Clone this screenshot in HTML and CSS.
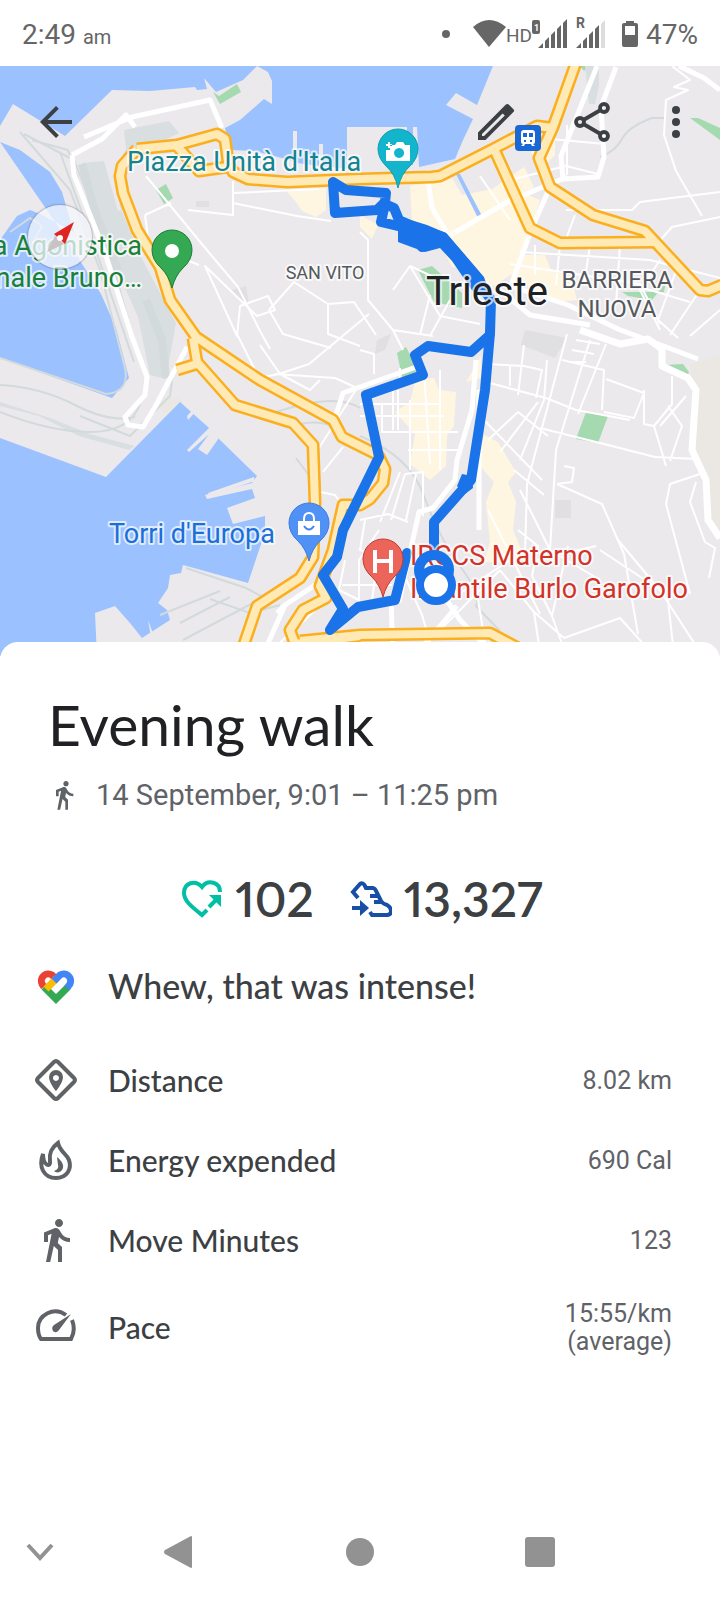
FILE: index.html
```
<!DOCTYPE html>
<html lang="en">
  <head>
    <meta charset="utf-8">
    <meta name="viewport" content="width=device-width, initial-scale=1">
    <title>Evening walk</title>
    <link rel="stylesheet" href="styles.css">
  </head>
  <body>
    <div class="status-bar">
      <div class="clock">2:49 <small>am</small></div>
      <div class="status-icons">
        <svg width="197" height="36" viewBox="440 15 197 36" fill="#666" aria-hidden="true">
          <circle cx="445" cy="33" r="4"/>
          <path d="M472 26q16-14 33 0L488 46z"/>
          <text class="status-hd" x="505" y="41">HD</text>
          <rect x="531" y="19" width="8" height="14" rx="2"/>
          <text class="status-sim" x="533" y="30">1</text>
          <path d="M537 47l5-5v5zM544 47V40l4-4v11zM550 47V34l4-4v17zM556 47V28l4-4v23zM562 47V22l4-4v29z"/>
          <text class="status-r" x="575" y="27">R</text>
          <path d="M575 47l5-5v5zM582 47V40l4-4v11zM588 47V34l4-4v17zM594 47V28l4-4v23z"/>
          <path d="M600 47V23l4-4v28z" fill="#ddd"/>
          <path fill-rule="evenodd" d="M625 20h8v2h2q2 0 2 2v20q0 2-2 2h-12q-2 0-2-2V24q0-2 2-2h2zM624 25v9h10v-9z"/>
        </svg>
        <span class="battery">47%</span>
      </div>
    </div>

    <div class="map-area">
      <svg class="map" viewBox="0 66 720 590" role="img" aria-label="Map of the walk around Trieste">
        <rect class="land" x="0" y="66" width="720" height="590"/>

        <!-- districts and parks -->
        <g class="district">
          <path d="M286 190l40-2 0 22-10 7-14-6-6-9zM410 186l42-8 10 17 30-6 32-22 10 20-40 50-20 30-22 0-15-28-25-18z"/>
          <path d="M452 238l70-46 18 8-22 70-28 18zM505 255l40 0 6 15 20 7 6 23-20 2-45-25zM530 150l25-10 0 15-15 15z"/>
          <path d="M360 215l18 10-6 14-12-12zM424 378h10l5 12 17 2-2 34-7 10-1 30-16 14-20-16 5-30-20-22 15-10 5-20z"/>
          <path d="M466 382l15-26v22zM484 435l14 7 18 30-8 10 8 20-3 28 9 22-10 10h-28l6-20-4-40 8-20-16-18z"/>
        </g>
        <path class="sand" d="M690 365l30-10v180l-15-30-10-60zM150 398h30l20 30-8 10-12-8z"/>
        <g class="building">
          <path d="M525 330l42 8-12 20-34-13zM555 500h16v18h-16zM196 201h13v6h-13zM232 290l14-4 3 18-12-6zM377 340l14-6-6 16-10 4z"/>
        </g>
        <g class="park">
          <path d="M213 92l6 4 18-12 4 8-21 12zM156 190l10-6 7 14-9 6zM418 270l14-4 30 27 0 15-28-6zM622 292l42 0 2-10-14 18-24-4z"/>
          <path d="M690 118l8 0 22 10v12zM397 353l9-6 8 15 2 12-14 3zM586 412l22 4-10 27-22-4zM665 365l18-1 6 8-2 4-22-5zM580 66h8l-4 5z"/>
        </g>

        <!-- water -->
        <g class="water">
          <path d="M0 66V126L13 104 65 136 112 90 150 91 195 87 197 90 207 89 204 78 216 92 243 80 257 66z"/>
          <path d="M257 66l11 6 4 9v23l-8-5-24 21-15 8 6 22 24 1 38 10 0-30h4v32l22 3v-22h4v22l24 3v-42h60v38h6v-38h4l2 40 36-8 8-19 10-21-27-14 10-12 21 12 18-44-4-5z"/>
          <path d="M0 142l20 8 30 22 12 20 7 24 5 16-34-18-10-4-13 6-17 24v118l112 40 17-20-13-50-15-34-41-65z"/>
          <path d="M0 438l106 39 74-75 28 25 10 11 39 38-5 7-47 12 2 4 45-10 3 9-28 10 6 16 32-8 0 16-17 51-65-18-2 8-11 2-2 13-10 15 9 7 3 10-28 18-12-15-15-17-20 7 2 43H0z"/>
          <path d="M460 174l22 42-5 0-21-42z"/>
        </g>
        <path class="land" d="M187 416l14-15 2 3-15 16zM187 450l24-24 4 3-26 23zM198 449l15-20 8 6-14 20zM208 493l46-16 1 4-45 15zM148 620l6 16-3 1z"/>

        <!-- rail yards -->
        <path class="yard" d="M124 130l45-9 10 12-53 26-12 18 6 30 22 52 34 64-10 56-16-4-12-58-24-54-20-60-12-40 22-2 14 50 8-2-10-40 10-20z"/>
        <path class="yard" d="M585 66h14v20l-4 18h-6zM0 402l50 16 40 16 45 12-6 4-50-14-40-20-39-10z"/>
        <g class="rail">
          <path class="rail-wide" d="M82 164l12 44 24 62M146 300l16 40 4 38"/>
          <path d="M0 385q40 2 75 20t60 12M0 412q50 20 90 20t50-28M0 358l106 36q26-2 18-30l-24-94-30-80-50-58M80 416l50 20 40-40 4-30M24 134l50 26 35 90 30 110M60 152l40 110 34 100M32 140l36 10 20 60M186 568l60 20 15 8M180 623l50-26M183 640l68-36M210 599l40 14 30-8M160 615l60-24M10 232l20-14 12 8-10 18"/>
          <path d="M360 436q50 20 64 60t36 70 16 40l24 25M276 412q60-20 84-4M300 424q30-6 42 12M600 157q16-6 22-18t30-21h12M296 458l15 20"/>
        </g>

        <!-- streets -->
        <g class="street">
          <path class="street-mid" d="M84 137l48-20 78-17 12 28M72 155l2 20 30 75 28 87 15 40-2 18-20 22 3 8 15 2 12-20 16-30 16-30M72 155l30-16 24-24 9 12"/>
          <path d="M146 176l60 73 32 38 22 44 10 18M145 215l26-12M145 215l4 30 50 20M205 266l32 70 3-30 28-10 7 14-18 6zM188 210l45 5 0-34M233 193l86-4M233 203l64 13 34 5M269 310l25-28 34 22 26-2 22 33M269 310l14 24 48 14M328 304l0 30 32 12M237 334l22 44 20-4 30-10 60-50M260 345l20 29 30 16 10-10M275 374l60 4 22 10M319 448l38-60M323 472l20-25M320 492l15 3 10 14"/>
          <path class="street-mid" d="M428 180l4 28 15 25M447 237l60-35 60-25M550 187l-18 41-22 60M597 66l-36 90 2 23 35-2 6-20-3-50 15-40M335 418l8-25 76-27M679 66l25 12 16 12"/>
          <path d="M492 150l18 40 22 44M480 176l30 44M510 180l56-14 32 8M540 138l65 6M567 125l0 50M672 66l18 14-16 7 14 3-22 10-2 35 12 36 26 45M720 192l-80 10-8 8h-42l-24 0M720 217l-48 10-16 18M575 215l-12 32M520 252l130 8 70 18M510 264l130 20 20 40M535 245l0 30M560 245l-4 40M590 245l-6 40M620 245l-4 60"/>
          <path class="street-mid" d="M508 285l60 20 50 24 80 30M500 290l30 25 60 10"/>
          <path d="M360 232l8 8v60l25 30 10 20M393 290l17-24 30 14M430 295l-10 40M450 300l-20 36M447 245l22 23M410 266l30 50 40 8M393 330l40 6M660 260l-20 30 20 40M640 287l50 15M680 260l-22 60 20 18M700 290l-30 45M720 310l-30 26"/>
          <path class="street-wide" d="M580 330l40 14 28-5 14 10v17l26 12 8 12-4 60 14 30 2 40 12 18"/>
          <path d="M360 350l14 4v20M360 404h80M382 404v28h58M398 390v40M360 416h84M382 432h76M400 388v-20M410 400v70M424 370l6 94M440 370v100M408 450h50M405 474l18-2v44M405 474l-14 46M416 474l-10 46M360 520l28-6 20 8M393 380v50M380 522l20-50"/>
          <path class="street-mid" d="M476 360l-4 50-15 50-2 20-22 28-14 4-20 90M479 390v140"/>
          <path d="M486 364l38 2 18 4-6 28M486 382l60 16 30 12 54 10M510 366v20M524 345l-6 50M547 360l-3 40-24 60M567 334l-40 150-2 70M590 340l-34 110-6 100M606 344l-28 70M562 360l42 10-2 40M576 340l24 4M572 350l22 4M568 362h18M484 420l58 60M488 440l30-28 30 24M500 452l38-50M540 428l60 15 55 14 42 2M604 412l30 6 10-25-38-14M644 390v34l10 2 12 40M672 376v28l-18 22M668 406l14 20-12 35M686 396l-26 30M514 470l30 25M520 490l30 60 50 30M557 484l45 20 22 50 14 80M557 484l15-2 2-14-10-2M488 510l30 60 22 44M518 530l20 16-6 30 20 40 10 28M536 560l60-14M600 550l60 40 45 70M618 540l50 60 6 55M700 474l-30 10-4 20 24 90M696 482l-6 20 15 40 10 6-6 30M534 612l30 26 56-20 36 40M500 570l34 42 6 40M552 616l16-70"/>
          <path class="street-mid" d="M391 600l2 55M457 606l-34 40M420 560l40 60 30 30"/>
          <path d="M402 570l20 45 12 40M380 540l-8 60M365 520l-5 30 40 10M450 600l60-40M440 630l60-60M475 580l12 76M345 560l-6 30 20 10v-40l20-30M342 585h50M335 590l-30 30-40 36"/>
        </g>
        <path class="street street-mid" d="M265 650l20-45 30-20M285 605l-8 8"/>

        <!-- main roads, casing first and fill on top -->
        <g class="road-edge">
          <path id="coast" d="M137 149l40-4 40-11 8 5 3 23 5 10 15 7 39 3 73-3 72-2 8-1 53-27 44-23 16 2M177 146l22 25 28-4"/>
          <path id="west" d="M137 149l-15 17-2 10 3 17 14 37 23 37 10 33 26 37 64 43 73 40 9 17 18 9 18 9 7 14-2 14-13 16-10 6-17 0-10 45-13 36 6 12-23 12-13 20 5 14 65-8"/>
          <path id="south" d="M193 338l4 24 38 43 58 18 20 22 2 58-2 54-13 21-43 28-17 50M177 370l23-7"/>
          <path id="bottom" d="M300 641l60-6 130-2 30 16"/>
          <path id="east" d="M577 60l-24 67-14 31 11 29 43 28 52 16 55 59 8 1 14-6"/>
          <path id="centre" d="M495 151l35 77 30 15 97-1"/>
        </g>
        <g class="road">
          <use href="#coast"/>
          <use href="#west"/>
          <use href="#south"/>
          <use href="#bottom"/>
          <use href="#east"/>
          <use href="#centre"/>
        </g>

        <!-- recorded route -->
        <path class="route" d="M333 182l2 31 42-3 8-8 1-9-40-3zM385 204l-4 18 42 10 20 5 32 38 16 25-1 33-5 57-14 90-37 42v30M385 204l9 4 5 12 24 11 20 6-21 10M490 335l-19 17-43-6-13 9 8 20-57 20 13 62-36 73-6 27-14 18 20 34-13 21 28-23 37-7 12-47"/>
        <path class="route-bulk" d="M398 216l29 9 19 8 14 16 24 28 8 24-18-8-22-32-12-13-15 4-27-10zM462 474l10 2 1 12-8 6-8-8z"/>

        <!-- place names -->
        <g class="label">
          <text class="teal" x="127" y="171">Piazza Unità d'Italia</text>
          <text class="green" x="142" y="255" text-anchor="end">a Agonistica</text>
          <text class="green" x="142" y="287" text-anchor="end">nale Bruno…</text>
          <text class="blue" x="109" y="543">Torri d'Europa</text>
          <text class="red" x="410" y="565">IRCCS Materno</text>
          <text class="red" x="410" y="598">Infantile Burlo Garofolo</text>
          <text class="area-small" x="325" y="279" text-anchor="middle">SAN VITO</text>
          <text class="area" x="617" y="288" text-anchor="middle">BARRIERA</text>
          <text class="area" x="617" y="317" text-anchor="middle">NUOVA</text>
          <text class="city" x="487" y="305" text-anchor="middle">Trieste</text>
        </g>

        <!-- pins -->
        <path class="pin-teal" d="M398 188q-3-14-12-22-8-8-8-17a20 20 0 0 1 40 0q0 9-8 17-9 8-12 22z"/>
        <path fill="#fff" fill-rule="evenodd" d="M386 150h4v-5h5l2-3h6l2 3h5v16h-24zM399 148a5 5 0 1 0 .1 0zM388 142h2v2h2v2h-2v2h-2v-2h-2v-2h2z"/>
        <path class="pin-green" d="M172 288q-3-12-11-20-9-8-9-18a20 20 0 0 1 40 0q0 10-9 18-8 8-11 20z"/>
        <circle cx="172" cy="251" r="7" fill="#fff"/>
        <path class="pin-blue" d="M309 561q-3-12-11-20-9-8-9-18a20 20 0 0 1 40 0q0 10-9 18-8 8-11 20z"/>
        <path fill="#fff" d="M298 521h22v14h-22z"/>
        <path d="M304 521v-2q0-6 5-6t5 6v2" fill="none" stroke="#fff" stroke-width="2"/>
        <path d="M304 526q5 7 10 0" fill="none" stroke="#4285f4" stroke-width="2"/>
        <path class="pin-red" d="M383 597q-3-12-11-20-9-8-9-18a20 20 0 0 1 40 0q0 10-9 18-8 8-11 20z"/>
        <path d="M375 550v23M391 550v23M375 561h16" stroke="#fff" stroke-width="4"/>
        <rect x="515" y="125" width="26" height="26" rx="4" fill="#1a67d6"/>
        <path fill="#fff" fill-rule="evenodd" d="M524 130h8q3 0 3 3v9q0 2-2 2l2 2h-3l-1-2h-6l-1 2h-3l2-2q-2 0-2-2v-9q0-3 3-3zM523 133v4h4v-4zM529 133v4h4v-4zM524 140h2v2h-2zM530 140h2v2h-2z"/>

        <!-- finish point -->
        <circle cx="434" cy="570" r="15" fill="none" stroke="#1a73e8" stroke-width="10"/>
        <circle cx="436" cy="585" r="16" fill="#fff" stroke="#1a73e8" stroke-width="8"/>
      </svg>

      <div class="toolbar">
        <button aria-label="Back">
          <svg width="48" height="48" viewBox="0 0 24 24"><path d="M20 11H7.800l5.600-5.600L12 4l-8 8 8 8 1.400-1.400L7.800 13H20z"/></svg>
        </button>
        <span class="spacer"></span>
        <button aria-label="Edit">
          <svg width="48" height="48" viewBox="0 0 24 24"><path fill-rule="evenodd" d="M3 17.250V21h3.750L20.700 7.050a1 1 0 0 0 0-1.420l-2.330-2.330a1 1 0 0 0-1.420 0zM5 18l10.300-10.300 1.100 1.100L6 19H5z"/></svg>
        </button>
        <button aria-label="Share">
          <svg width="48" height="48" viewBox="0 0 24 24" fill="none" stroke="#3c4043" stroke-width="1.900"><circle cx="18" cy="5" r="2"/><circle cx="6" cy="12" r="2"/><circle cx="18" cy="19" r="2"/><path d="M7.700 11l8.600-5M7.700 13l8.600 5"/></svg>
        </button>
        <button aria-label="More options">
          <svg width="48" height="48" viewBox="0 0 24 24"><circle cx="12" cy="6" r="2"/><circle cx="12" cy="12" r="2"/><circle cx="12" cy="18" r="2"/></svg>
        </button>
      </div>
      <button class="compass" aria-label="Reset map to north">
        <svg width="64" height="64" viewBox="0 0 64 64"><path d="M19 47l8-16 9 8z" fill="#c9c2c4"/><path d="M46 17L26 29l11 10z" fill="#e02420"/><circle cx="32" cy="33" r="3" fill="#fff"/></svg>
      </button>
    </div>

    <main class="sheet">
      <h1>Evening walk</h1>
      <div class="when">
        <svg width="32" height="32" viewBox="0 0 24 24"><path d="M13.500 5.500c1.100 0 2-.9 2-2s-.9-2-2-2-2 .9-2 2 .9 2 2 2zM9.800 8.900L7 23h2.100l1.800-8 2.100 2v6h2v-7.500l-2.100-2 .6-3C14.800 12 16.800 13 19 13v-2c-1.900 0-3.500-1-4.300-2.400l-1-1.600c-.4-.6-1-1-1.700-1-.3 0-.5.1-.8.100L6 8.300V13h2V9.600z"/></svg>
        <span>14 September, 9:01 – 11:25 pm</span>
      </div>

      <div class="scores">
        <div class="score">
          <svg width="42" height="42" viewBox="0 0 42 42" fill="none" stroke="#00bfa5" stroke-width="4"><path d="M39 14C39 4 27 1 21 9 14 1 3 5 3 15c0 8 8 14 18 22l5-5"/><path d="M28 29l7-7"/><path d="M28 17h12v12z" fill="#00bfa5" stroke="none"/></svg>
          <span>102</span>
        </div>
        <div class="score">
          <svg width="42" height="42" viewBox="0 0 42 42" fill="none" stroke="#174ea6" stroke-width="4"><path d="M8 20l-5-6 7-8q3-2 5 2l1 2h7q2 0 4 5l4 8q2 3 6 4 4 2 4 6 0 4-5 4H22l-2-3M20 18h7M24 24h7M2 30h9"/><path d="M10 22l9 8-9 8z" fill="#174ea6" stroke="none"/></svg>
          <span>13,327</span>
        </div>
      </div>

      <div class="message">
        <svg width="40" height="42" viewBox="0 0 40 42" fill="none" stroke-width="7">
          <path d="M8 22l12 12 12-12" stroke="#34a853"/>
          <path d="M8 22l-2-3A7 7 0 0 1 16 10l5 5" stroke="#ea4335"/>
          <path d="M10 24l11-11" stroke="#fbbc04"/>
          <path d="M18 16l6-6A7 7 0 0 1 34 19l-3 4" stroke="#4285f4"/>
        </svg>
        <span>Whew, that was intense!</span>
      </div>

      <dl class="metrics">
        <div class="metric">
          <svg width="42" height="42" viewBox="0 0 42 42"><path d="M19 3q2-2 4 0l16 16q2 2 0 4L23 39q-2 2-4 0L3 23q-2-2 0-4z" fill="none" stroke="#5f6368" stroke-width="4"/><path fill-rule="evenodd" d="M21 11a7 7 0 0 0-7 7c0 6 7 14 7 14s7-8 7-14a7 7 0 0 0-7-7zm0 5a3 3 0 1 1-.1 0z"/></svg>
          <dt>Distance</dt>
          <dd>8.02 km</dd>
        </div>
        <div class="metric">
          <svg width="42" height="42" viewBox="0 0 42 42">
            <path d="M8 15C3 28 9 39 21 39c11 0 16-9 13-18-2-6-9-8-11-17-7 5-9 10-8 18 1 7-7 5-7-7z" fill="none" stroke="#5f6368" stroke-width="4"/>
            <path d="M22 18c5 4 8 9 5 13-2 3-6 3-8 1 3-1 5-3 4-6z"/>
          </svg>
          <dt>Energy expended</dt>
          <dd>690 Cal</dd>
        </div>
        <div class="metric">
          <svg width="48" height="48" viewBox="0 0 24 24"><path d="M13.500 5.500c1.100 0 2-.9 2-2s-.9-2-2-2-2 .9-2 2 .9 2 2 2zM9.800 8.900L7 23h2.100l1.800-8 2.100 2v6h2v-7.500l-2.100-2 .6-3C14.800 12 16.800 13 19 13v-2c-1.900 0-3.500-1-4.300-2.400l-1-1.600c-.4-.6-1-1-1.700-1-.3 0-.5.1-.8.100L6 8.300V13h2V9.600z"/></svg>
          <dt>Move Minutes</dt>
          <dd>123</dd>
        </div>
        <div class="metric">
          <svg width="42" height="42" viewBox="0 0 42 42"><path d="M31 9C19 0 3 9 3 22q0 7 3 11h30q5-9 1-19" fill="none" stroke="#5f6368" stroke-width="4"/><path d="M36 8L24 24q-3 4-6 1-2-4 1-6z"/></svg>
          <dt>Pace</dt>
          <dd>15:55/km<br>(average)</dd>
        </div>
      </dl>
    </main>

    <nav class="nav-bar">
      <button class="nav-hide" aria-label="Hide navigation bar">
        <svg width="28" height="20" viewBox="0 0 28 20"><path d="M2 3l12 13L26 3" fill="none" stroke="#929292" stroke-width="4"/></svg>
      </button>
      <button aria-label="Back">
        <svg width="32" height="32" viewBox="0 0 32 32"><path d="M27 0q1 0 1 1v30q0 1-1 1L1 18q-2-2 0-4z"/></svg>
      </button>
      <button aria-label="Home">
        <svg width="32" height="32" viewBox="0 0 32 32"><circle cx="16" cy="16" r="14"/></svg>
      </button>
      <button aria-label="Recent apps">
        <svg width="32" height="32" viewBox="0 0 32 32"><rect x="1" y="1" width="30" height="30" rx="3"/></svg>
      </button>
    </nav>
  </body>
</html>
```
FILE: styles.css
```
body {
  margin: 0;
  min-height: 100vh;
  display: flex;
  flex-direction: column;
  background: #fff;
  color: #3c4043;
  font-family: Roboto, sans-serif;
}
button {
  border: 0;
  padding: 0;
  background: none;
  cursor: pointer;
}
svg {
  display: block;
}

/* status bar */
.status-bar {
  display: flex;
  justify-content: space-between;
  align-items: center;
  height: 66px;
  padding: 2px 22px 0;
  box-sizing: border-box;
  color: #666;
  font-size: 28px;
}
.clock small {
  font-size: 20px;
}
.status-icons {
  display: flex;
  align-items: center;
  gap: 8px;
}
.status-hd {
  font-size: 19px;
}
.status-sim {
  font-size: 9px;
  font-weight: bold;
  fill: #fff;
}
.status-r {
  font-size: 14px;
  font-weight: bold;
}

/* map */
.map-area {
  position: relative;
}
.map {
  width: 100%;
  height: auto;
}
.land {
  fill: #ebe9ec;
}
.water {
  fill: #9bc1ff;
}
.district {
  fill: #fef6e0;
}
.sand {
  fill: #ebe8e3;
}
.building {
  fill: #e0dfe2;
}
.park {
  fill: #a5d9b0;
}
.yard {
  fill: #d9dfe0;
}
.rail {
  fill: none;
  stroke: #d3dadb;
  stroke-width: 2;
}
.rail-wide {
  stroke-width: 8;
}
.street {
  fill: none;
  stroke: #fff;
  stroke-width: 2;
  stroke-linejoin: round;
}
.street-mid {
  stroke-width: 5;
}
.street-wide {
  stroke-width: 7;
}
.road-edge {
  fill: none;
  stroke: #fbaf1e;
  stroke-width: 13;
  stroke-linejoin: round;
}
.road {
  fill: none;
  stroke: #ffe9b5;
  stroke-width: 8;
  stroke-linejoin: round;
}
.road-edge path {
  stroke: inherit;
  stroke-width: inherit;
}
.route {
  fill: none;
  stroke: #1a73e8;
  stroke-width: 10;
  stroke-linejoin: round;
  stroke-linecap: round;
}
.route-bulk {
  fill: #1a73e8;
}
.label {
  font-size: 27px;
  stroke: #fff;
  stroke-opacity: 0.7;
  stroke-width: 4;
  stroke-linejoin: round;
  paint-order: stroke;
}
.teal {
  fill: #12838f;
}
.green {
  fill: #188038;
}
.blue {
  fill: #1a6fd8;
}
.red {
  fill: #d33228;
}
.area {
  fill: #55585c;
  font-size: 24px;
}
.area-small {
  fill: #55585c;
  font-size: 18px;
}
.city {
  fill: #202124;
  font-size: 40px;
}
.pin-teal {
  fill: #12b5cb;
  stroke: #129eaf;
}
.pin-green {
  fill: #34a853;
  stroke: #188038;
}
.pin-blue {
  fill: #5091f5;
  stroke: #3c7de0;
}
.pin-red {
  fill: #ec655b;
  stroke: #c5392f;
}

.toolbar {
  position: absolute;
  top: 32px;
  left: 32px;
  right: 20px;
  display: flex;
  gap: 48px;
  fill: #3c4043;
}
.toolbar .spacer {
  flex: 1;
}
.toolbar button:last-child {
  margin-left: -12px;
}
.compass {
  position: absolute;
  top: 139px;
  left: 28px;
  border-radius: 50%;
  background: rgba(245, 247, 252, 0.75);
  box-shadow: 0 0 2px #555;
}

/* details */
.sheet {
  position: relative;
  flex: 1;
  margin-top: -14px;
  padding: 46px 48px 0 36px;
  border-radius: 18px 18px 0 0;
  background: #fff;
}
h1 {
  margin: 0 0 0 12px;
  color: #202124;
  font-family: Lato, sans-serif;
  font-size: 57px;
  font-weight: 400;
  line-height: 72px;
}
.when {
  display: flex;
  align-items: center;
  gap: 16px;
  margin: 17px 0 0 12px;
  color: #5f6368;
  fill: #5f6368;
  font-size: 29px;
  line-height: 36px;
}
.scores {
  display: flex;
  justify-content: center;
  gap: 36px;
  margin: 54px 0 0 16px;
  font-family: Lato, sans-serif;
  font-size: 48px;
  font-weight: 600;
  font-variant-numeric: proportional-nums;
  line-height: 64px;
}
.score {
  display: flex;
  align-items: center;
  gap: 12px;
}
.message {
  display: flex;
  align-items: center;
  gap: 32px;
  height: 109px;
  font-family: Lato, sans-serif;
  font-size: 34px;
  font-weight: 500;
}
.metrics {
  margin: 0;
}
.metric {
  display: grid;
  grid-template-columns: 40px 1fr auto;
  align-items: center;
  column-gap: 32px;
  min-height: 80px;
}
.metric:last-child {
  min-height: 94px;
}
.metric svg {
  justify-self: center;
  fill: #5f6368;
}
.metric dt {
  font-family: Lato, sans-serif;
  font-size: 30px;
  font-weight: 500;
}
.metric dd {
  margin: 0;
  padding-top: 2px;
  color: #5f6368;
  font-size: 25px;
  line-height: 28px;
  text-align: right;
}

/* system navigation */
.nav-bar {
  display: grid;
  grid-template-columns: 1fr 2fr 2fr 2fr 1fr;
  align-items: center;
  justify-items: center;
  height: 96px;
  fill: #929292;
}
.nav-hide {
  justify-self: start;
  margin-left: 26px;
}
```
